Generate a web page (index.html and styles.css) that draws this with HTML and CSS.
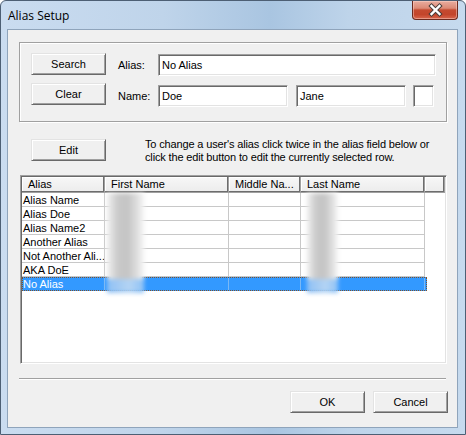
FILE: index.html
```html
<!DOCTYPE html>
<html>
<head>
<meta charset="utf-8">
<link rel="stylesheet" href="styles.css">
</head>
<body>
<div class="window">
  <div class="titlebar">
    <span class="title">Alias Setup</span>
    <div class="close">
      <svg width="45" height="18" viewBox="0 0 45 18">
        <path d="M18.5 5 L26.5 13 M26.5 5 L18.5 13" stroke="#4a3f3c" stroke-width="4.4" stroke-linecap="square"/>
        <path d="M18.5 5 L26.5 13 M26.5 5 L18.5 13" stroke="#ffffff" stroke-width="2.4" stroke-linecap="square"/>
      </svg>
    </div>
  </div>
  <div class="client">
    <div class="group">
      <div class="frow">
        <div class="btn">Search</div>
        <span class="lbl">Alias:</span>
        <div class="tb tb-alias">No Alias</div>
      </div>
      <div class="frow frow2">
        <div class="btn">Clear</div>
        <span class="lbl">Name:</span>
        <div class="tb tb-last">Doe</div>
        <div class="tb tb-first">Jane</div>
        <div class="tb tb-mid"></div>
      </div>
    </div>
    <div class="editrow">
      <div class="btn">Edit</div>
      <p class="hint">To change a user's alias click twice in the alias field below or<br>click the edit button to edit the currently selected row.</p>
    </div>
    <div class="list">
      <div class="lhead">
        <div class="hc c1">Alias</div>
        <div class="hc c2">First Name</div>
        <div class="hc c3">Middle Na...</div>
        <div class="hc c4">Last Name</div>
        <div class="hc c5"></div>
      </div>
      <div class="lrow"><div class="dc c1">Alias Name</div><div class="dc c2"></div><div class="dc c3"></div><div class="dc c4"></div></div>
      <div class="lrow"><div class="dc c1">Alias Doe</div><div class="dc c2"></div><div class="dc c3"></div><div class="dc c4"></div></div>
      <div class="lrow"><div class="dc c1">Alias Name2</div><div class="dc c2"></div><div class="dc c3"></div><div class="dc c4"></div></div>
      <div class="lrow"><div class="dc c1">Another Alias</div><div class="dc c2"></div><div class="dc c3"></div><div class="dc c4"></div></div>
      <div class="lrow"><div class="dc c1">Not Another Ali...</div><div class="dc c2"></div><div class="dc c3"></div><div class="dc c4"></div></div>
      <div class="lrow"><div class="dc c1">AKA DoE</div><div class="dc c2"></div><div class="dc c3"></div><div class="dc c4"></div></div>
      <div class="lrow sel"><div class="dc c1">No Alias</div><div class="dc c2"></div><div class="dc c3"></div><div class="dc c4"></div></div>
      <div class="blur blur-first"><div class="bg"></div><div class="bb"></div></div>
      <div class="blur blur-last"><div class="bg"></div><div class="bb"></div></div>
    </div>
    <div class="sep"></div>
    <div class="footer">
      <div class="btn">OK</div>
      <div class="btn">Cancel</div>
    </div>
  </div>
</div>
</body>
</html>
```

FILE: styles.css
```css
html, body {
  margin: 0;
  padding: 0;
  background: #ffffff;
}

.window {
  position: relative;
  width: 466px;
  height: 435px;
  box-sizing: border-box;
  background: linear-gradient(to right, #cadcf0 0%, #bfd4ea 35%, #a9c5e1 58%, #bed4ea 75%, #c6daee 100%);
  border: 1px solid #4d5f74;
  border-radius: 6px 6px 0 0;
  overflow: hidden;
  font-family: "Liberation Sans", Arial, sans-serif;
  font-size: 11px;
  color: #000;
}

.titlebar {
  height: 28px;
  display: flex;
  align-items: flex-start;
}

.title {
  font-family: "Open Sans", "Noto Sans", sans-serif;
  font-size: 12px;
  margin: 6px 0 0 7px;
  color: #000;
}

.close {
  margin-left: auto;
  margin-right: 7px;
  width: 44px;
  height: 18px;
  box-sizing: content-box;
  border: 1px solid #6b2a1f;
  border-top: none;
  border-radius: 0 0 4px 4px;
  background: linear-gradient(to bottom, #e9ad9f 0%, #dc8a76 40%, #c54a30 50%, #c3452b 75%, #d8664d 100%);
  box-shadow: inset 0 0 0 1px rgba(255,220,210,0.45);
}

.close svg {
  display: block;
}

.client {
  margin-left: 6px;
  width: 451px;
  height: 399px;
  box-sizing: border-box;
  background: #f0f0f0;
  border: 1px solid #8fa4bb;
  display: flex;
  flex-direction: column;
}

.group {
  margin: 12px 0 0 11px;
  width: 428px;
  height: 80px;
  box-sizing: border-box;
  border: 1px solid #a0a0a0;
  box-shadow: inset 1px 1px 0 #ffffff, 1px 1px 0 #ffffff;
  padding: 10px 0 0 11px;
}

.frow {
  display: flex;
  align-items: flex-start;
  height: 30px;
}

.btn {
  width: 75px;
  height: 22px;
  box-sizing: border-box;
  background: #f0f0f0;
  border-top: 1px solid #e3e3e3;
  border-left: 1px solid #e3e3e3;
  border-right: 1px solid #696969;
  border-bottom: 1px solid #696969;
  box-shadow: inset 1px 1px 0 #ffffff, inset -1px -1px 0 #a0a0a0;
  display: flex;
  align-items: center;
  justify-content: center;
  font-size: 11px;
  flex: none;
}

.lbl {
  width: 40px;
  padding-left: 12px;
  height: 22px;
  line-height: 22px;
  margin-top: 1px;
  flex: none;
}

.frow2 .lbl {
  margin-top: 2px;
}

.tb {
  height: 22px;
  box-sizing: border-box;
  background: #ffffff;
  border-top: 1px solid #a0a0a0;
  border-left: 1px solid #a0a0a0;
  border-right: 1px solid #ffffff;
  border-bottom: 1px solid #ffffff;
  box-shadow: inset 1px 1px 0 #696969, inset -1px -1px 0 #e3e3e3;
  padding-left: 3px;
  line-height: 20px;
  flex: none;
}

.tb-alias {
  width: 278px;
  margin-top: 1px;
}

.tb-last {
  width: 130px;
  margin-top: 2px;
}

.tb-first {
  width: 110px;
  margin: 2px 0 0 8px;
}

.tb-mid {
  width: 21px;
  margin: 2px 0 0 7px;
}

.editrow {
  display: flex;
  align-items: flex-start;
  height: 22px;
  margin: 17px 0 0 23px;
}

.hint {
  margin: -1px 0 0 39px;
  line-height: 13px;
  letter-spacing: -0.15px;
  white-space: nowrap;
}

.list {
  position: relative;
  margin: 14px 0 0 12px;
  width: 427px;
  height: 189px;
  box-sizing: border-box;
  background: #ffffff;
  border-top: 1px solid #a0a0a0;
  border-left: 1px solid #a0a0a0;
  border-right: 1px solid #ffffff;
  border-bottom: 1px solid #ffffff;
  box-shadow: inset 1px 1px 0 #696969, inset -1px -1px 0 #e3e3e3;
  padding: 1px;
  overflow: hidden;
}

.lhead {
  display: flex;
  height: 16px;
}

.hc {
  box-sizing: border-box;
  height: 16px;
  background: linear-gradient(to bottom, #f7f7f7, #ececec);
  border-right: 1px solid #a0a0a0;
  border-bottom: 1px solid #a0a0a0;
  box-shadow: inset -1px -1px 0 #6d6d6d, inset 1px 1px 0 #ffffff;
  padding-left: 6px;
  line-height: 15px;
  white-space: nowrap;
  overflow: hidden;
  flex: none;
}

.c1 { width: 83px; }
.c2 { width: 124px; }
.c3 { width: 72px; }
.c4 { width: 124px; }
.hc.c5 { flex: 1; }

.lrow {
  display: flex;
  height: 14px;
}

.dc {
  box-sizing: border-box;
  height: 14px;
  border-right: 1px solid #c8c8c8;
  border-bottom: 1px solid #c8c8c8;
  line-height: 14px;
  padding-left: 1px;
  white-space: nowrap;
  overflow: hidden;
  flex: none;
}

.lrow.sel {
  width: 405px;
  background: #3399ff;
  color: #ffffff;
  outline: 1px dotted #7a5230;
  outline-offset: -1px;
}

.lrow.sel .dc {
  border-color: #7ab8f5;
  border-bottom-color: transparent;
}

.blur {
  position: absolute;
  top: 17px;
  height: 100px;
  display: flex;
  flex-direction: column;
  filter: blur(2px);
}

.blur-first {
  left: 86px;
  width: 37px;
}

.blur-last {
  left: 286px;
  width: 31px;
}

.blur .bg {
  height: 86px;
  background: linear-gradient(to right, #f0f0f0 0%, #c9c9c9 30%, #c4c4c4 55%, #dddddd 80%, #f6f6f6 100%);
}

.blur .bb {
  height: 14px;
  background: linear-gradient(to right, #8fc0f5 0%, #a8cdf3 40%, #b4d4f4 60%, #8fc2f6 100%);
}

.sep {
  margin: 14px 0 0 11px;
  width: 427px;
  height: 1px;
  background: #a0a0a0;
  box-shadow: 0 1px 0 #ffffff;
}

.footer {
  display: flex;
  justify-content: flex-end;
  gap: 8px;
  margin-top: 12px;
  padding-right: 9px;
}
```
